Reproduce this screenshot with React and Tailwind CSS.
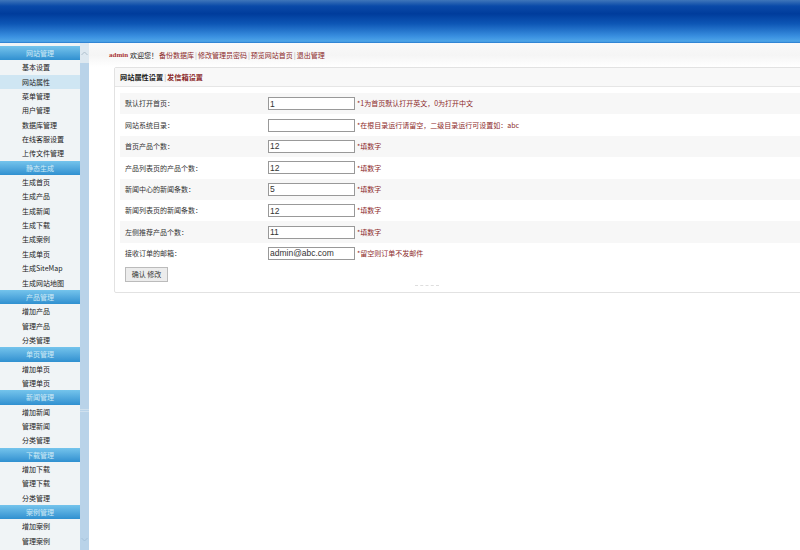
import React from "react";

const menu = [
  { title: "网站管理", items: ["基本设置", "网站属性", "菜单管理", "用户管理", "数据库管理", "在线客服设置", "上传文件管理"] },
  { title: "静态生成", items: ["生成首页", "生成产品", "生成新闻", "生成下载", "生成案例", "生成单页", "生成SiteMap", "生成网站地图"] },
  { title: "产品管理", items: ["增加产品", "管理产品", "分类管理"] },
  { title: "单页管理", items: ["增加单页", "管理单页"] },
  { title: "新闻管理", items: ["增加新闻", "管理新闻", "分类管理"] },
  { title: "下载管理", items: ["增加下载", "管理下载", "分类管理"] },
  { title: "案例管理", items: ["增加案例", "管理案例"] },
];

const fields = [
  { label: "默认打开首页：", value: "1", note: "*1为首页默认打开英文，0为打开中文" },
  { label: "网站系统目录：", value: "", note: "*在根目录运行请留空，二级目录运行可设置如：abc" },
  { label: "首页产品个数：", value: "12", note: "*填数字" },
  { label: "产品列表页的产品个数：", value: "12", note: "*填数字" },
  { label: "新闻中心的新闻条数：", value: "5", note: "*填数字" },
  { label: "新闻列表页的新闻条数：", value: "12", note: "*填数字" },
  { label: "左侧推荐产品个数：", value: "11", note: "*填数字" },
  { label: "接收订单的邮箱：", value: "admin@abc.com", note: "*留空则订单不发邮件" },
];

const links = ["备份数据库", "修改管理员密码", "预览网站首页", "退出管理"];

function Sidebar() {
  return (
    <div className="flex w-[89px] h-[507px] overflow-hidden shrink-0">
      <div className="w-[80px] bg-[#f0f4f6] pt-[3px]">
        {menu.map((group) => (
          <div key={group.title}>
            <div className="h-[14.35px] leading-[14.35px] text-center text-[7px] text-[#cfeaf5] bg-gradient-to-b from-[#74c4ec] to-[#2f90d0]">
              {group.title}
            </div>
            {group.items.map((item) => (
              <div
                key={item}
                className={
                  "h-[14.35px] leading-[14.35px] pl-[22px] text-[7px] text-[#222] whitespace-nowrap " +
                  (item === "网站属性" ? "bg-[#cfe6f3]" : "")
                }
              >
                {item}
              </div>
            ))}
          </div>
        ))}
      </div>
      <div className="relative w-[9px] bg-[#b9d3e9] flex flex-col justify-between">
        <div className="h-[20px] bg-[#dde8f0] flex items-center justify-center">
          <svg width="7" height="5" viewBox="0 0 7 5" fill="none" stroke="#aebfcc" strokeWidth="1"><path d="M0.5 4L3.5 1L6.5 4" /></svg>
        </div>
        <div className="absolute left-0 right-0 top-[366px] h-[3px] border-y border-[#cfe0ee]" />
        <div className="h-[13px] flex items-start justify-center">
          <svg width="7" height="5" viewBox="0 0 7 5" fill="none" stroke="#a3c0d8" strokeWidth="1"><path d="M0.5 1L3.5 4L6.5 1" /></svg>
        </div>
      </div>
    </div>
  );
}

function FieldRow({ field, shaded }) {
  return (
    <div className={"flex items-center h-[21.4px] pl-[5px] " + (shaded ? "bg-[#f7f7f7]" : "")}>
      <div className="w-[143px] text-[7px] text-[#333] whitespace-nowrap">{field.label}</div>
      <input
        readOnly
        value={field.value}
        className="w-[87px] h-[13px] px-[1px] border border-[#999] bg-white text-[8.5px] text-[#333] font-['Liberation_Sans',sans-serif] outline-none"
      />
      <div className="ml-[2px] text-[7px] text-[#8c2a2a] whitespace-nowrap">{field.note}</div>
    </div>
  );
}

export default function App() {
  return (
    <div className="w-[800px] h-[550px] overflow-hidden bg-white font-['Noto_Sans_CJK_SC','Liberation_Sans',sans-serif]">
      <div className="h-[43px] bg-[linear-gradient(to_bottom,#3f76ba_0%,#0a4aa8_14%,#003c9c_32%,#0d56b5_55%,#3a90e0_85%,#4ea5e8_96%,#2478cc_100%)]" />
      <div className="flex">
        <Sidebar />
        <div className="flex-1 min-w-0">
          <div className="h-[24px] pl-[20px] flex items-center text-[7px] whitespace-nowrap bg-gradient-to-b from-[#fafafa] via-[#f5f5f5] to-white">
            <span className="font-bold text-[#a33] font-['Liberation_Serif','Noto_Sans_CJK_SC',serif]">admin</span>
            <span className="text-[#222] ml-[2px]">欢迎您！</span>
            {links.map((link, i) => (
              <span key={link} className="ml-[1px]">
                {i > 0 && <span className="text-[#aaa] mr-[1px]">|</span>}
                <span className="text-[#8c2a2a]">{link}</span>
              </span>
            ))}
          </div>
          <div className="relative ml-[25px] w-[700px] h-[226px] border border-[#e2e2e2] rounded-[2px]">
            <div className="h-[19px] flex items-center pl-[5px] bg-[#f8f8f8] border-b border-[#e6e6e6] text-[7.2px] font-bold whitespace-nowrap">
              <span className="text-[#222]">网站属性设置</span>
              <span className="text-[#aaa] font-normal mx-[1px]">|</span>
              <span className="text-[#8c2a2a]">发信箱设置</span>
            </div>
            <div className="pt-[6px] pl-[5px]">
              {fields.map((field, i) => (
                <FieldRow key={field.label} field={field} shaded={i % 2 === 0} />
              ))}
              <button className="block ml-[5px] mt-[3px] w-[43px] h-[15px] bg-[#ececec] border border-[#bbb] text-[7px] text-[#333]">确认 修改</button>
            </div>
            <div className="absolute left-[300px] bottom-[6px] w-[24px] border-t border-dashed border-[#dedede]" />
          </div>
        </div>
      </div>
    </div>
  );
}
